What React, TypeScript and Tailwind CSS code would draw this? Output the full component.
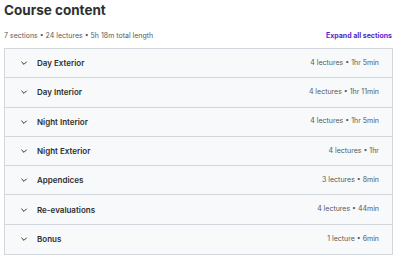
import React from 'react';

interface Section {
  title: string;
  meta: string;
}

const sections: Section[] = [
  { title: 'Day Exterior', meta: '4 lectures • 1hr 5min' },
  { title: 'Day Interior', meta: '4 lectures • 1hr 11min' },
  { title: 'Night Interior', meta: '4 lectures • 1hr 5min' },
  { title: 'Night Exterior', meta: '4 lectures • 1hr' },
  { title: 'Appendices', meta: '3 lectures • 8min' },
  { title: 'Re-evaluations', meta: '4 lectures • 44min' },
  { title: 'Bonus', meta: '1 lecture • 6min' },
];

const Chevron: React.FC = () => (
  <svg className="w-[8px] h-[8px] text-[#2d2f31]" viewBox="0 0 24 24" fill="none" stroke="currentColor" strokeWidth={3} strokeLinecap="round" strokeLinejoin="round">
    <path d="M5 9l7 7 7-7" />
  </svg>
);

const App: React.FC = () => {
  return (
    <div className="w-[400px] h-[259px] bg-white px-[4px] pt-[1px] text-[#2d2f31]" style={{ fontFamily: 'Inter, "Open Sans", sans-serif' }}>
      <h2 className="text-[13.5px] font-bold leading-[18px]">Course content</h2>

      {/* Summary */}
      <div className="flex items-center justify-between mt-[12px] h-[10px] text-[7px] pr-[4px]">
        <span className="text-[#55595c]">7 sections • 24 lectures • 5h 18m total length</span>
        <span className="font-bold text-[#5624d0]">Expand all sections</span>
      </div>

      {/* Sections */}
      <div className="mt-[7px] w-[389px] border border-[#d1d7dc]">
        {sections.map((s, i) => (
          <div
            key={s.title}
            className={`flex items-center justify-between h-[29.3px] bg-[#f7f9fa] pl-[15px] pr-[13px] ${i < sections.length - 1 ? 'border-b border-[#d1d7dc]' : ''}`}
          >
            <div className="flex items-center gap-[9px]">
              <Chevron />
              <span className="text-[8px] font-semibold">{s.title}</span>
            </div>
            <span className="text-[7px] text-[#55595c]">{s.meta}</span>
          </div>
        ))}
      </div>
    </div>
  );
};

export default App;
